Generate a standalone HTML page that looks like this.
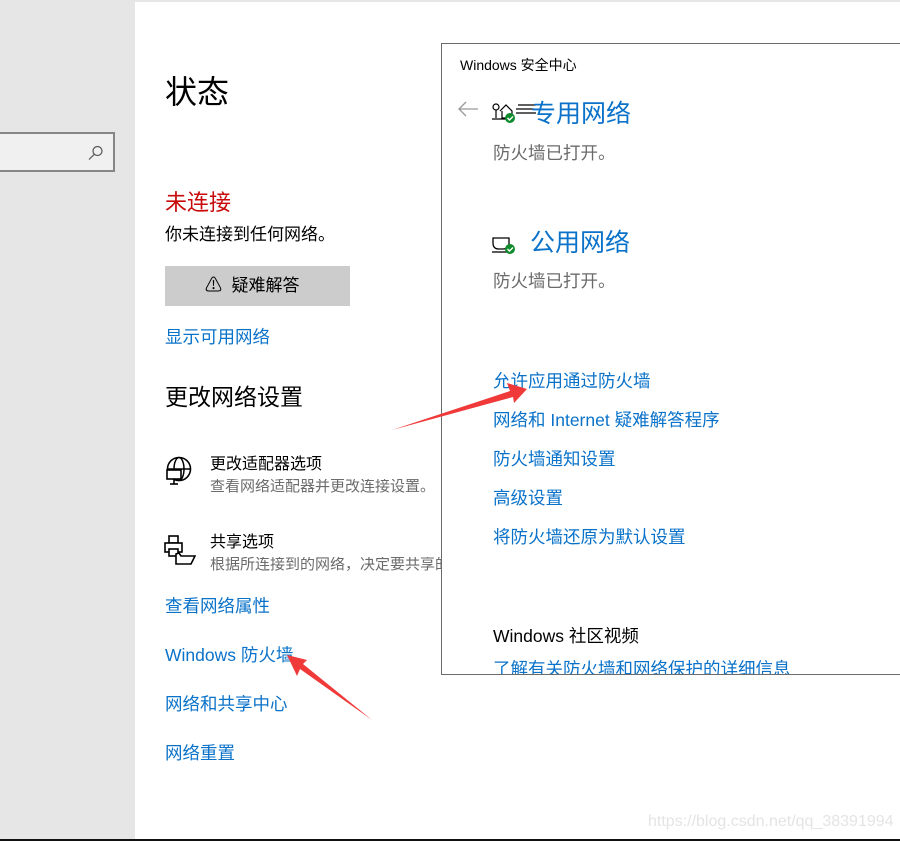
<!DOCTYPE html>
<html><head><meta charset="utf-8"><style>
*{margin:0;padding:0;box-sizing:border-box}
body{width:900px;height:841px;position:relative;overflow:hidden;background:#fff;font-family:"Liberation Sans","Noto Sans CJK SC",sans-serif;}
.a{position:absolute;white-space:nowrap;line-height:1}
.blue{color:#0a72c9}
.gray{color:#6b6b6b}
</style></head><body>
<div class="a" style="left:135px;top:0;width:765px;height:2px;background:#e6e6e6"></div>
<div class="a" style="left:0;top:0;width:135px;height:841px;background:#e6e6e6"></div>
<div class="a" style="left:0;top:132px;width:115px;height:40px;background:#f0f0f0;border:2px solid #868686;border-left:none"></div>
<svg class="a" style="left:87px;top:144px" width="18" height="18" viewBox="0 0 18 18"><circle cx="10.5" cy="7" r="4.5" fill="none" stroke="#555" stroke-width="1.2"/><line x1="7.3" y1="10.3" x2="2" y2="15.5" stroke="#555" stroke-width="1.2"/></svg>

<div class="a" style="left:165px;top:76px;font-size:32px;color:#000">状态</div>
<div class="a" style="left:165px;top:192px;font-size:22px;color:#c80a0a">未连接</div>
<div class="a" style="left:165px;top:226px;font-size:17px;color:#000">你未连接到任何网络。</div>
<div class="a" style="left:165px;top:266px;width:185px;height:40px;background:#cccccc"></div>
<div class="a" style="left:205px;top:277px;font-size:17px;color:#000">⚠&nbsp;&nbsp;疑难解答</div>
<div class="a blue" style="left:165px;top:329px;font-size:17.5px">显示可用网络</div>
<div class="a" style="left:165px;top:386px;font-size:23px;color:#000">更改网络设置</div>

<svg class="a" style="left:164px;top:456px" width="30" height="32" viewBox="0 0 30 32"><circle cx="15" cy="13" r="11.5" fill="none" stroke="#000" stroke-width="1.6"/><ellipse cx="15" cy="13" rx="5" ry="11.5" fill="none" stroke="#000" stroke-width="1.5"/><line x1="3.5" y1="13" x2="26.5" y2="13" stroke="#000" stroke-width="1.5"/><rect x="3" y="14" width="14" height="9" fill="#fff" stroke="#000" stroke-width="1.6"/><line x1="10" y1="23" x2="10" y2="28" stroke="#000" stroke-width="1.6"/><line x1="6" y1="28" x2="14" y2="28" stroke="#000" stroke-width="1.6"/></svg>
<div class="a" style="left:210px;top:457px;font-size:16px;color:#000">更改适配器选项</div>
<div class="a gray" style="left:210px;top:479px;font-size:15px;width:231px;overflow:hidden">查看网络适配器并更改连接设置。</div>

<svg class="a" style="left:164px;top:534px" width="32" height="32" viewBox="0 0 32 32"><rect x="5" y="2" width="9" height="7" fill="none" stroke="#000" stroke-width="1.6"/><rect x="1" y="9" width="17" height="9" fill="#fff" stroke="#000" stroke-width="1.6"/><rect x="5" y="15" width="9" height="7" fill="#fff" stroke="#000" stroke-width="1.6"/><path d="M12 20 L12 30 L27 30 L31 22 L17 22 L15 19 Z" fill="#fff" stroke="#000" stroke-width="1.6"/></svg>
<div class="a" style="left:210px;top:535px;font-size:16px;color:#000">共享选项</div>
<div class="a gray" style="left:210px;top:557px;font-size:15px;width:231px;overflow:hidden">根据所连接到的网络，决定要共享的内容。</div>

<div class="a blue" style="left:165px;top:598px;font-size:17.5px">查看网络属性</div>
<div class="a blue" style="left:165px;top:647px;font-size:17.5px">Windows 防火墙</div>
<div class="a blue" style="left:165px;top:696px;font-size:17.5px">网络和共享中心</div>
<div class="a blue" style="left:165px;top:745px;font-size:17.5px">网络重置</div>

<div class="a" style="left:441px;top:43px;width:470px;height:632px;background:#fff;border:1px solid #6b6b6b;overflow:hidden">
 <div class="a" style="left:18px;top:14px;font-size:14px;color:#000">Windows 安全中心</div>
 <svg class="a" style="left:15px;top:56px" width="22" height="18" viewBox="0 0 22 18"><path d="M21 9 H2 M9 2 L2 9 L9 16" fill="none" stroke="#999" stroke-width="1.3"/></svg>
 <svg class="a" style="left:50px;top:56px" width="50" height="24" viewBox="0 0 50 24"><circle cx="4" cy="7" r="3" fill="none" stroke="#000" stroke-width="1.2"/><line x1="4" y1="10" x2="4" y2="18" stroke="#000" stroke-width="1.2"/><path d="M8 11 L14 5 L20 11 V18 H10 V11" fill="none" stroke="#000" stroke-width="1.2"/><line x1="0" y1="19" x2="17" y2="19" stroke="#000" stroke-width="1.3"/><line x1="26" y1="5" x2="44" y2="5" stroke="#000" stroke-width="1.2"/><line x1="24" y1="9" x2="42" y2="9" stroke="#000" stroke-width="1.2"/><line x1="24" y1="13" x2="44" y2="13" stroke="#000" stroke-width="1.2"/><circle cx="18" cy="18" r="5" fill="#0f8a2c"/><path d="M15.5 18 L17.5 20 L21 16.5" fill="none" stroke="#fff" stroke-width="1.4"/></svg>
 <div class="a blue" style="left:89px;top:58px;font-size:25px">专用网络</div>
 <div class="a gray" style="left:51px;top:101px;font-size:17.5px">防火墙已打开。</div>
 <svg class="a" style="left:50px;top:190px" width="26" height="22" viewBox="0 0 26 22"><path d="M1 4 H17 V9 Q17 15 11 15 H7 Q1 15 1 9 Z" fill="none" stroke="#000" stroke-width="1.3"/><line x1="0" y1="18" x2="16" y2="18" stroke="#000" stroke-width="1.3"/><circle cx="18" cy="15" r="5" fill="#0f8a2c"/><path d="M15.5 15 L17.5 17 L21 13.5" fill="none" stroke="#fff" stroke-width="1.4"/></svg>
 <div class="a blue" style="left:88px;top:187px;font-size:25px">公用网络</div>
 <div class="a gray" style="left:51px;top:229px;font-size:17.5px">防火墙已打开。</div>
 <div class="a blue" style="left:51px;top:329px;font-size:17.5px">允许应用通过防火墙</div>
 <div class="a blue" style="left:51px;top:368px;font-size:17.5px">网络和 Internet 疑难解答程序</div>
 <div class="a blue" style="left:51px;top:407px;font-size:17.5px">防火墙通知设置</div>
 <div class="a blue" style="left:51px;top:446px;font-size:17.5px">高级设置</div>
 <div class="a blue" style="left:51px;top:485px;font-size:17.5px">将防火墙还原为默认设置</div>
 <div class="a" style="left:51px;top:584px;font-size:17.5px;color:#000">Windows 社区视频</div>
 <div class="a blue" style="left:51px;top:617px;font-size:17.5px">了解有关防火墙和网络保护的详细信息</div>
</div>

<svg class="a" style="left:0;top:0" width="900" height="841" viewBox="0 0 900 841">
<polygon points="392,430 513,397 514,403 527,389 507,383 510,391" fill="#f03a3a"/>
<polygon points="372,720 303,664 307,660 287,655 297,676 300,669" fill="#f03a3a"/>
</svg>
<div class="a" style="left:648px;top:814px;font-size:16px;color:#e4e4e4">https://blog.csdn.net/qq_38391994</div>
<div class="a" style="left:0;top:839px;width:900px;height:2px;background:#111"></div>
</body></html>
